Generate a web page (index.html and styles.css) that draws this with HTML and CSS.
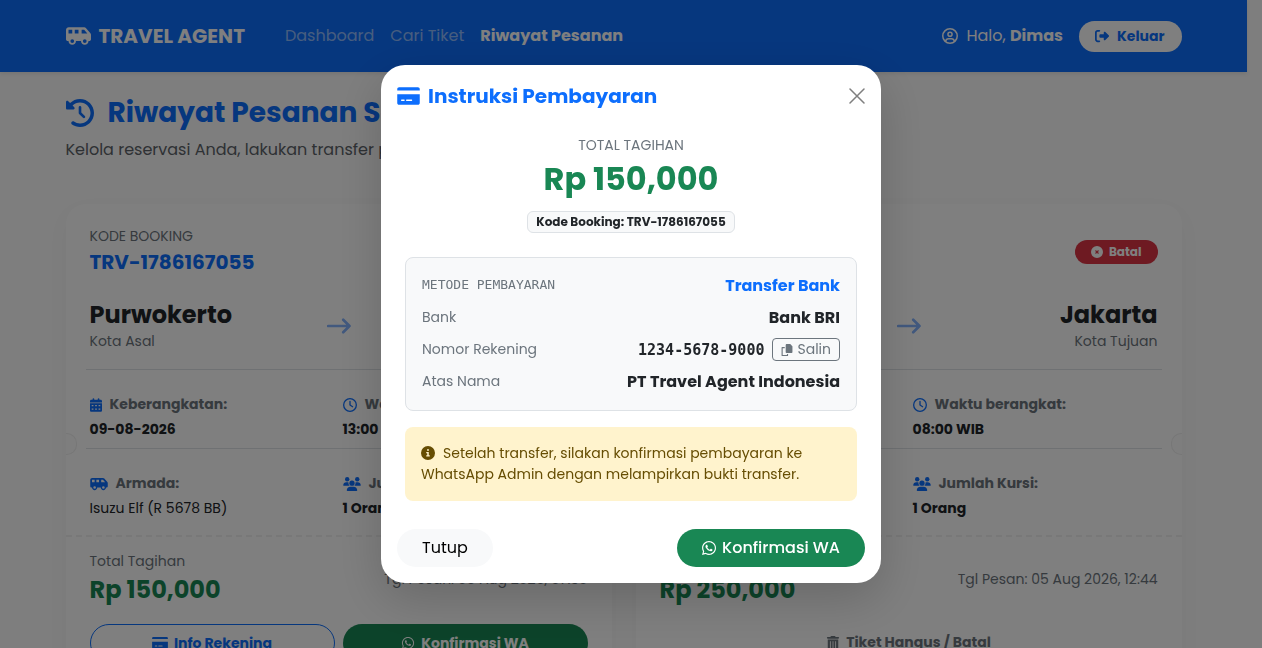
FILE: index.html
```html
<!DOCTYPE html>
<html lang="id">
<head>
    <meta charset="UTF-8">
    <meta name="viewport" content="width=device-width, initial-scale=1.0">
    <title>Riwayat Pesanan - Travel Agent</title>
    <link rel="stylesheet" href="styles.css">
</head>
<body class="modal-open">
    <!-- icon sprite -->
    <svg class="sprite" aria-hidden="true">
        <symbol id="i-van" viewBox="0 0 640 512"><path d="M64 104v88h96V96H72c-4.400 0-8 3.600-8 8zm482 88L465 96H400v96H546zm-226 0V96H224v96h96zM592 384H576c0 53-43 96-96 96s-96-43-96-96H256c0 53-43 96-96 96s-96-43-96-96H48c-26.500 0-48-21.500-48-48V104C0 64 32 32 72 32H465c19 0 37 8 49 23L625 186c10 12 15 26 15 42V336c0 26.500-21.500 48-48 48zm-64 0a48 48 0 1 0-96 0 48 48 0 1 0 96 0zM160 432a48 48 0 1 0 0-96 48 48 0 1 0 0 96z"/></symbol>
        <symbol id="i-card" viewBox="0 0 576 512"><path d="M48 32C20 32 0 52 0 80v32H576V80c0-28-20-48-48-48H48zM576 208H0V432c0 28 20 48 48 48H528c28 0 48-20 48-48V208zM112 344h64c20 0 20 40 0 40H112c-20 0-20-40 0-40zm128 0H368c20 0 20 40 0 40H240c-20 0-20-40 0-40z"/></symbol>
        <symbol id="i-history" viewBox="0 0 512 512"><path d="M75 75L41 41C26 26 0 36.600 0 58V168c0 13.300 10.700 24 24 24H134c21.400 0 32-26 17-41l-31-31C155 85.500 203 64 256 64c106 0 192 86 192 192s-86 192-192 192c-41 0-79-12.700-110-34.400c-14.500-10-34.400-6.600-44.600 8s-6.600 34.400 8 44.600C151 495 202 512 256 512c141.400 0 256-114.600 256-256S397.400 0 256 0C185 0 121 28.700 75 75zm181 53c-13.300 0-24 10.700-24 24V256c0 6.400 2.500 12.500 7 17l72 72c9.400 9.400 24.600 9.400 34 0s9.400-24.600 0-34l-65-65V152c0-13.300-10.700-24-24-24z"/></symbol>
        <symbol id="i-user" viewBox="0 0 512 512"><g fill="none" stroke="currentColor" stroke-width="48"><circle cx="256" cy="256" r="232"/><circle cx="256" cy="200" r="66"/><path d="M114 424c12-56 46-80 94-80h96c48 0 82 24 94 80"/></g></symbol>
        <symbol id="i-exit" viewBox="0 0 512 512"><path d="M378 106L500.700 228.700c15 15 15 39 0 54.600L378 406c-6.400 6.400-15 10-24 10c-18.700 0-34-15-34-34V320H192c-17.700 0-32-14.300-32-32v-64c0-17.700 14.300-32 32-32h128v-62c0-19 15-34 34-34c9 0 17.600 3.600 24 10zM160 96H96c-17.700 0-32 14.300-32 32v256c0 17.700 14.300 32 32 32h64c17.700 0 32 14.300 32 32s-14.300 32-32 32H96c-53 0-96-43-96-96V128C0 75 43 32 96 32h64c17.700 0 32 14.300 32 32s-14.300 32-32 32z"/></symbol>
        <symbol id="i-calendar" viewBox="0 0 448 512"><path fill-rule="evenodd" d="M96 32c0-42 64-42 64 0v32h128V32c0-42 64-42 64 0v32h48c26 0 48 22 48 48v48H0v-48c0-26 22-48 48-48h48zM0 192h448v272c0 26-22 48-48 48H48c-26 0-48-22-48-48zM64 256v48h64v-48zM192 256v48h64v-48zM320 256v48h64v-48zM64 384v48h64v-48zM192 384v48h64v-48zM320 384v48h64v-48z"/></symbol>
        <symbol id="i-clock" viewBox="0 0 512 512"><path d="M464 256A208 208 0 1 1 48 256a208 208 0 1 1 416 0zM0 256a256 256 0 1 0 512 0A256 256 0 1 0 0 256zM232 120V256c0 8 4 15.500 10.700 20l96 64c11 7.400 26 4.400 33.300-6.700s4.400-26-6.700-33.300L280 243V120c0-13.300-10.700-24-24-24s-24 10.700-24 24z"/></symbol>
        <symbol id="i-users" viewBox="0 0 640 512"><circle cx="144" cy="80" r="80"/><circle cx="512" cy="80" r="80"/><circle cx="320" cy="224" r="96"/><path d="M0 299c0-59 48-107 107-107h42c16 0 31 4 45 10-9 48 6 84 40 118H21c-12 0-21-9-21-21zM406 320c34-34 49-70 40-118 14-6 29-10 45-10h42c59 0 107 48 107 107 0 12-9 21-21 21zM128 485c0-73 60-133 133-133h118c73 0 133 60 133 133 0 15-12 27-27 27H155c-15 0-27-12-27-27z"/></symbol>
        <symbol id="i-arrow" viewBox="0 0 512 512"><path d="M24 256H480M346 122L480 256L346 390" fill="none" stroke="currentColor" stroke-width="56" stroke-linecap="round" stroke-linejoin="round"/></symbol>
        <symbol id="i-whatsapp" viewBox="0 0 448 512"><path d="M380.900 97C339 55 283 32 224 32c-122.400 0-222 99.600-222 222 0 39 10 77 29.600 111L0 480l117.700-31c32.400 17.700 69 27 106 27 122.300 0 224-99.600 224-222 0-59-25-115-67-157zm-157 341.600c-33 0-65.700-9-94-25.700l-6.700-4-69.800 18.300L72 359l-4.400-7c-18.500-29.400-28-63-28-98 0-101.700 82.800-184.500 184.600-184.500 49.300 0 95.600 19 130.400 54 34.800 35 56 81 56 130.500 0 101.800-85 184.600-186.600 184.600zm101-138c-5.500-2.800-32.800-16-38-18-5-2-8.800-2.800-12.500 2.800-3.700 5.600-14.300 18-17.600 21.800-3 3.700-6.500 4-12 1.400-32.600-16.300-54-29-75.500-66-5.700-9.800 5.700-9 16.300-30.300 1.800-3.700 1-7-.5-9.700-1.400-2.800-12.500-30-17-41-4.500-10.800-9-9.300-12.500-9.500h-10.600c-3.700 0-9.700 1.400-14.800 7-5 5.600-19.400 19-19.400 46.300 0 27.300 20 53.700 22.600 57.400 2.800 3.700 39 59.700 94.800 83.800 35 15 49 16.500 66.600 14 10.700-1.600 32.800-13.400 37.400-26.400 4.600-13 4.600-24 3-26.400-1.300-2.500-5-4-10.500-6.600z"/></symbol>
        <symbol id="i-info" viewBox="0 0 512 512"><path fill-rule="evenodd" d="M256 0a256 256 0 1 0 0 512a256 256 0 1 0 0-512zM256 112a34 34 0 1 1 0 68a34 34 0 1 1 0-68zM192 216h92v120h36v50H192v-50h36v-70h-36z"/></symbol>
        <symbol id="i-xmark" viewBox="0 0 512 512"><path fill-rule="evenodd" d="M256 0a256 256 0 1 0 0 512a256 256 0 1 0 0-512zM175 209l34-34 47 47 47-47 34 34-47 47 47 47-34 34-47-47-47 47-34-34 47-47z"/></symbol>
        <symbol id="i-copy" viewBox="0 0 512 512"><path d="M208 0h124c13 0 25 5 34 14l68 68c9 9 14 21 14 34v220c0 26-22 48-48 48H208c-26 0-48-22-48-48V48c0-26 22-48 48-48z" transform="translate(40)"/><path d="M160 152H48v336h230v-64" fill="none" stroke="currentColor" stroke-width="48" stroke-linejoin="round"/></symbol>
        <symbol id="i-trash" viewBox="0 0 448 512"><path fill-rule="evenodd" d="M135 18c6-11 17-18 29-18h120c12 0 23 7 29 18l7 14h96c43 0 43 64 0 64H32c-43 0-43-64 0-64h96zM32 128h384v320c0 35-29 64-64 64H96c-35 0-64-29-64-64zM112 192v256h32V192zM208 192v256h32V192zM304 192v256h32V192z"/></symbol>
        <symbol id="i-close" viewBox="0 0 16 16"><path d="M1 1L15 15M15 1L1 15" fill="none" stroke="currentColor" stroke-width="1.5" stroke-linecap="round"/></symbol>
    </svg>

    <!-- navbar -->
    <nav class="navbar">
        <div class="container navbar-inner">
            <a class="brand" href="#"><svg class="icon"><use href="#i-van"/></svg>TRAVEL AGENT</a>
            <div class="nav-links">
                <a href="#">Dashboard</a>
                <a href="#">Cari Tiket</a>
                <a class="active" href="#">Riwayat Pesanan</a>
            </div>
            <span class="greeting"><svg class="icon"><use href="#i-user"/></svg><span>Halo, <b>Dimas</b></span></span>
            <a class="btn-logout" href="#"><svg class="icon"><use href="#i-exit"/></svg>Keluar</a>
        </div>
    </nav>

    <main class="container main">
        <h1 class="page-title"><svg class="icon"><use href="#i-history"/></svg>Riwayat Pesanan Saya</h1>
        <p class="page-lead">Kelola reservasi Anda, lakukan transfer pembayaran.</p>

        <div class="tickets">
            <!-- ticket 1 -->
            <article class="ticket">
                <div class="ticket-body">
                    <div class="ticket-head">
                        <div>
                            <div class="label">KODE BOOKING</div>
                            <div class="code">TRV-1786167055</div>
                        </div>
                    </div>
                    <div class="route">
                        <div>
                            <h2 class="city">Purwokerto</h2>
                            <div class="label">Kota Asal</div>
                        </div>
                        <svg class="icon arrow"><use href="#i-arrow"/></svg>
                        <div class="end">
                            <h2 class="city">Jakarta</h2>
                            <div class="label">Kota Tujuan</div>
                        </div>
                    </div>
                    <div class="info info-line">
                        <div>
                            <div class="info-title"><svg class="icon narrow"><use href="#i-calendar"/></svg>Keberangkatan:</div>
                            <b>09-08-2026</b>
                        </div>
                        <div>
                            <div class="info-title"><svg class="icon"><use href="#i-clock"/></svg>Waktu berangkat:</div>
                            <b>13:00 WIB</b>
                        </div>
                    </div>
                    <div class="info">
                        <div>
                            <div class="info-title"><svg class="icon wide"><use href="#i-van"/></svg>Armada:</div>
                            <span>Isuzu Elf (R 5678 BB)</span>
                        </div>
                        <div>
                            <div class="info-title"><svg class="icon wide"><use href="#i-users"/></svg>Jumlah Kursi:</div>
                            <b>1 Orang</b>
                        </div>
                    </div>
                </div>
                <div class="ticket-foot">
                    <div class="total">
                        <div>
                            <div class="label">Total Tagihan</div>
                            <div class="price">Rp 150,000</div>
                        </div>
                        <div class="label">Tgl Pesan: 05 Aug 2026, 07:30</div>
                    </div>
                    <div class="actions">
                        <button type="button" class="btn btn-outline"><svg class="icon"><use href="#i-card"/></svg>Info Rekening</button>
                        <button type="button" class="btn btn-success"><svg class="icon narrow"><use href="#i-whatsapp"/></svg>Konfirmasi WA</button>
                    </div>
                </div>
            </article>

            <!-- ticket 2 -->
            <article class="ticket">
                <div class="ticket-body">
                    <div class="ticket-head">
                        <div>
                            <div class="label">KODE BOOKING</div>
                            <div class="code">TRV-1785908640</div>
                        </div>
                        <span class="badge-cancel"><svg class="icon"><use href="#i-xmark"/></svg>Batal</span>
                    </div>
                    <div class="route">
                        <div>
                            <h2 class="city">Tegal</h2>
                            <div class="label">Kota Asal</div>
                        </div>
                        <svg class="icon arrow"><use href="#i-arrow"/></svg>
                        <div class="end">
                            <h2 class="city">Jakarta</h2>
                            <div class="label">Kota Tujuan</div>
                        </div>
                    </div>
                    <div class="info info-line">
                        <div>
                            <div class="info-title"><svg class="icon narrow"><use href="#i-calendar"/></svg>Keberangkatan:</div>
                            <b>06-08-2026</b>
                        </div>
                        <div>
                            <div class="info-title"><svg class="icon"><use href="#i-clock"/></svg>Waktu berangkat:</div>
                            <b>08:00 WIB</b>
                        </div>
                    </div>
                    <div class="info">
                        <div>
                            <div class="info-title"><svg class="icon wide"><use href="#i-van"/></svg>Armada:</div>
                            <span>Toyota Hiace</span>
                        </div>
                        <div>
                            <div class="info-title"><svg class="icon wide"><use href="#i-users"/></svg>Jumlah Kursi:</div>
                            <b>1 Orang</b>
                        </div>
                    </div>
                </div>
                <div class="ticket-foot">
                    <div class="total">
                        <div>
                            <div class="label">Total Tagihan</div>
                            <div class="price">Rp 250,000</div>
                        </div>
                        <div class="label">Tgl Pesan: 05 Aug 2026, 12:44</div>
                    </div>
                    <div class="expired"><svg class="icon"><use href="#i-trash"/></svg>Tiket Hangus / Batal</div>
                </div>
            </article>
        </div>
    </main>

    <!-- payment modal -->
    <div class="backdrop">
        <div class="modal" role="dialog" aria-modal="true" aria-labelledby="modal-title">
            <div class="modal-header">
                <h2 class="modal-title" id="modal-title"><svg class="icon"><use href="#i-card"/></svg>Instruksi Pembayaran</h2>
                <button type="button" class="btn-close" aria-label="Tutup"><svg class="icon"><use href="#i-close"/></svg></button>
            </div>
            <div class="modal-body">
                <div class="bill">
                    <div class="bill-label">TOTAL TAGIHAN</div>
                    <div class="bill-price">Rp 150,000</div>
                    <span class="bill-code">Kode Booking: TRV-1786167055</span>
                </div>
                <div class="account">
                    <div class="account-row">
                        <span class="mono">METODE PEMBAYARAN</span>
                        <b class="primary">Transfer Bank</b>
                    </div>
                    <div class="account-row">
                        <span>Bank</span>
                        <b>Bank BRI</b>
                    </div>
                    <div class="account-row">
                        <span>Nomor Rekening</span>
                        <div class="account-number">
                            <b class="mono">1234-5678-9000</b>
                            <button type="button" class="btn-copy"><svg class="icon"><use href="#i-copy"/></svg>Salin</button>
                        </div>
                    </div>
                    <div class="account-row">
                        <span>Atas Nama</span>
                        <b>PT Travel Agent Indonesia</b>
                    </div>
                </div>
                <div class="alert"><svg class="icon"><use href="#i-info"/></svg>Setelah transfer, silakan konfirmasi pembayaran ke WhatsApp Admin dengan melampirkan bukti transfer.</div>
            </div>
            <div class="modal-footer">
                <button type="button" class="btn btn-light">Tutup</button>
                <button type="button" class="btn btn-success"><svg class="icon narrow"><use href="#i-whatsapp"/></svg>Konfirmasi WA</button>
            </div>
        </div>
    </div>
</body>
</html>
```
FILE: styles.css
```css
*{
    margin: 0;
    padding: 0;
    box-sizing: border-box;
}
body{
    font-family: Poppins, Inter, "Open Sans", sans-serif;
    font-size: 16px;
    line-height: 24px;
    color: #212529;
    background: #fcfcfc;
}
body.modal-open{
    height: 100vh;
    overflow: hidden;
    padding-right: 15px;
}
a{
    color: inherit;
    text-decoration: none;
}
button{
    font: inherit;
    cursor: pointer;
}
.sprite{
    display: none;
}
.icon{
    width: 16px;
    height: 16px;
    flex: none;
    fill: currentColor;
}
.container{
    width: 100%;
    max-width: 1140px;
    margin: 0 auto;
    padding: 0 12px;
}

/* navbar */
.navbar{
    background: #0d6efd;
    color: #fff;
    padding: 20px 0;
    box-shadow: 0 2px 4px rgba(0,0,0,.08);
}
.navbar-inner{
    display: flex;
    align-items: center;
    height: 32px;
}
.brand{
    display: flex;
    align-items: center;
    gap: 8px;
    font-size: 20px;
    font-weight: 700;
    margin-right: 40px;
}
.brand .icon{
    width: 25px;
    height: 20px;
}
.nav-links{
    display: flex;
    gap: 16px;
    margin-right: auto;
    color: rgba(255,255,255,.55);
}
.nav-links .active{
    color: #fff;
    font-weight: 700;
}
.greeting{
    display: flex;
    align-items: center;
    gap: 8px;
    margin-right: 16px;
}
.btn-logout{
    display: flex;
    align-items: center;
    gap: 8px;
    padding: 5px 17px 5px 16px;
    border-radius: 16px;
    background: #fff;
    color: #0d6efd;
    font-size: 14px;
    line-height: 21px;
    font-weight: 700;
}
.btn-logout .icon{
    width: 14px;
    height: 14px;
}

/* heading */
.main{
    padding-top: 24px;
}
.page-title{
    display: flex;
    align-items: center;
    gap: 14px;
    font-size: 28px;
    line-height: 34px;
    color: #0d6efd;
}
.page-title .icon{
    width: 28px;
    height: 28px;
}
.page-lead{
    margin-top: 8px;
    color: #5c6369;
    white-space: nowrap;
}

/* tickets */
.tickets{
    display: grid;
    grid-template-columns: 1fr 1fr;
    gap: 24px;
    margin-top: 42px;
}
.ticket{
    position: relative;
    background: #fff;
    border-radius: 20px;
    box-shadow: 0 8px 24px rgba(0,0,0,.03);
}
/* notches on the ticket edges */
.ticket::before,
.ticket::after{
    content: "";
    position: absolute;
    top: 229px;
    width: 10px;
    height: 20px;
    background: #fcfcfc;
    border: 1px solid #eee;
}
.ticket::before{
    left: 0;
    border-left: 0;
    border-radius: 0 10px 10px 0;
}
.ticket::after{
    right: 0;
    border-right: 0;
    border-radius: 10px 0 0 10px;
}
.ticket-body{
    padding: 22px 24px 8px;
    border-bottom: 2px dashed #f1f1f1;
}
.ticket-head{
    display: flex;
    justify-content: space-between;
    align-items: center;
}
.label{
    font-size: 14px;
    line-height: 21px;
    color: #6c757d;
}
.code{
    font-size: 20px;
    line-height: 30px;
    font-weight: 700;
    color: #0d6efd;
}
.badge-cancel{
    display: flex;
    align-items: center;
    gap: 6px;
    padding: 4px 16px;
    border-radius: 12px;
    background: #dc3545;
    color: #fff;
    font-size: 12px;
    line-height: 16px;
    font-weight: 700;
}
.badge-cancel .icon{
    width: 12px;
    height: 12px;
}
.route{
    display: grid;
    grid-template-columns: 1fr 24px 1fr;
    align-items: center;
    margin: 22px 0 17px;
}
.city{
    font-size: 24px;
    line-height: 32px;
}
.arrow{
    width: 24px;
    height: 24px;
    color: #84b2fc;
}
.end{
    text-align: right;
}
.info{
    display: grid;
    grid-template-columns: 1fr 1fr;
    margin: 0 -4px;
    padding: 24px 0 8px;
    font-size: 14px;
    line-height: 21px;
}
.info > div{
    padding: 0 4px;
}
.info-line{
    border-top: 1px solid #dee2e6;
    border-bottom: 1px solid #dee2e6;
}
.info-title{
    display: flex;
    align-items: center;
    gap: 8px;
    margin-bottom: 4px;
    font-weight: 700;
    color: #6c757d;
}
.info-title .icon{
    width: 14px;
    height: 14px;
    color: #0d6efd;
}
.info-title .narrow{
    width: 12px;
}
.info-title .wide{
    width: 18px;
}
.ticket-foot{
    padding: 14px 24px 24px;
}
.total{
    display: flex;
    justify-content: space-between;
    align-items: center;
}
.price{
    font-size: 24px;
    line-height: 36px;
    font-weight: 700;
    color: #198754;
}
.actions{
    display: grid;
    grid-template-columns: 1fr 1fr;
    gap: 8px;
    margin-top: 16px;
}
.btn{
    display: flex;
    align-items: center;
    justify-content: center;
    gap: 6px;
    padding: 6px 24px;
    border: 1px solid transparent;
    border-radius: 19px;
    font-weight: 500;
}
.btn .narrow{
    width: 14px;
}
.actions .btn{
    font-size: 14px;
    font-weight: 700;
}
.actions .icon{
    height: 14px;
}
.btn-outline{
    background: transparent;
    border-color: #0d6efd;
    color: #0d6efd;
}
.btn-success{
    background: #198754;
    color: #fff;
}
.btn-light{
    background: #f8f9fa;
    color: #000;
    font-weight: 400;
}
.expired{
    display: flex;
    align-items: center;
    justify-content: center;
    gap: 6px;
    margin-top: 16px;
    padding: 8px 0;
    font-size: 14px;
    line-height: 21px;
    font-weight: 700;
    color: #6c757d;
}
.expired .icon{
    width: 14px;
    height: 14px;
}

/* modal */
.backdrop{
    position: fixed;
    inset: 0;
    display: flex;
    align-items: center;
    justify-content: center;
    background: rgba(0,0,0,.5);
}
.modal{
    width: 100%;
    max-width: 500px;
    background: #fff;
    border-radius: 24px;
    box-shadow: 0 16px 48px rgba(0,0,0,.18);
}
.modal-header{
    display: flex;
    align-items: center;
    justify-content: space-between;
    padding: 16px 16px 0;
}
.modal-title{
    display: flex;
    align-items: center;
    gap: 8px;
    font-size: 20px;
    line-height: 30px;
    color: #0d6efd;
}
.modal-title .icon{
    width: 23px;
    height: 20px;
}
.btn-close{
    display: flex;
    border: 0;
    background: none;
    color: #7f7f7f;
}
.modal-body{
    padding: 24px;
}
.bill{
    display: flex;
    flex-direction: column;
    align-items: center;
    margin-bottom: 24px;
}
.bill-label{
    font-size: 14px;
    line-height: 21px;
    color: #6c757d;
}
.bill-price{
    margin-bottom: 9px;
    font-size: 32px;
    line-height: 46px;
    font-weight: 700;
    color: #198754;
}
.bill-code{
    padding: 2px 8px;
    border: 1px solid #dee2e6;
    border-radius: 6px;
    background: #f8f9fa;
    font-size: 12px;
    line-height: 16px;
    font-weight: 700;
}
.account{
    display: flex;
    flex-direction: column;
    gap: 8px;
    padding: 16px;
    border: 1px solid #dee2e6;
    border-radius: 8px;
    background: #f8f9fa;
}
.account-row{
    display: flex;
    align-items: flex-start;
    justify-content: space-between;
    height: 24px;
}
.account-row > span{
    font-size: 14px;
    line-height: 22px;
    color: #6c757d;
}
.account-row .primary{
    color: #0d6efd;
}
.mono{
    font-family: "DejaVu Sans Mono", "Liberation Mono", monospace;
}
.account-row > .mono{
    font-size: 13px;
}
.account-number{
    display: flex;
    align-items: flex-start;
    gap: 8px;
}
.account-number .mono{
    font-size: 15px;
}
.btn-copy{
    display: flex;
    align-items: center;
    gap: 4px;
    padding: 0 8px;
    border: 1px solid #6c757d;
    border-radius: 4px;
    background: transparent;
    color: #6c757d;
    font-size: 14px;
    line-height: 21px;
}
.btn-copy .icon{
    width: 12px;
    height: 12px;
}
.alert{
    margin-top: 16px;
    padding: 16px;
    border-radius: 8px;
    background: #fff3cd;
    color: #664d03;
    font-size: 14px;
    line-height: 21px;
}
.alert .icon{
    width: 14px;
    height: 14px;
    margin-right: 8px;
    vertical-align: -2px;
}
.modal-footer{
    display: flex;
    justify-content: space-between;
    padding: 4px 16px 16px;
}
```
